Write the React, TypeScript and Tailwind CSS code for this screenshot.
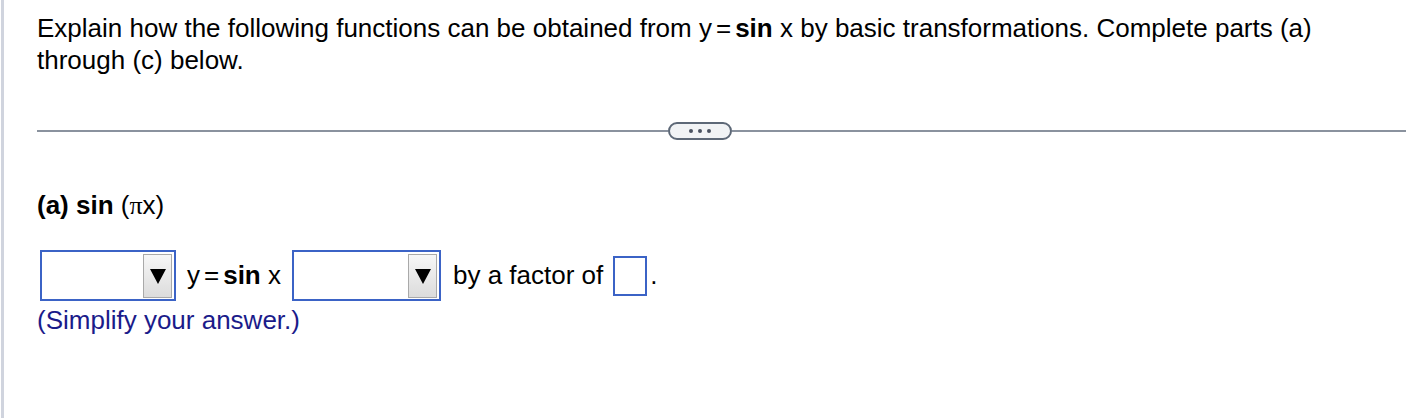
import React from 'react'

function DropTrigger() {
  return (
    <span className="flex h-[44px] w-[29px] items-center justify-center border border-[#a9a9a9] bg-gradient-to-b from-[#f7f7f7] to-[#dcdcdc]">
      <svg width="18" height="18" viewBox="0 0 18 18">
        <polygon points="1,2 17,2 9,17" fill="#000" />
      </svg>
    </span>
  )
}

function Select({ width }: { width: string }) {
  return (
    <span className={`inline-flex h-[51px] items-center justify-end border-2 border-[#3b63c6] bg-white pr-[2px] ${width}`}>
      <DropTrigger />
    </span>
  )
}

// y = sin x with the tighter spacing round "="
function YSinX() {
  return (
    <span className="whitespace-nowrap">
      y<span className="mx-[4px]">=</span><b>sin</b> x
    </span>
  )
}

export default function App() {
  return (
    <div
      className="ml-px h-[418px] border-l-[3px] border-[#d0d4de] bg-white text-[26px] text-black"
      style={{ fontFamily: '"Liberation Sans", Arial, sans-serif' }}
    >
      <div className="pl-[33px] pr-[60px] pt-[12px] leading-[32px]">
        Explain how the following functions can be obtained from <YSinX /> by basic transformations. Complete parts (a) through (c) below.
      </div>

      <div className="mt-[46px] flex items-center pl-[33px]">
        <div className="h-[2px] w-[631px] bg-[#8a929e]" />
        <div className="flex h-[18px] w-[64px] items-center justify-center gap-[5px] rounded-full border-2 border-[#5d6877] bg-[#f1f3f5]">
          <span className="h-[4px] w-[4px] rounded-full bg-[#4a5260]" />
          <span className="h-[4px] w-[4px] rounded-full bg-[#4a5260]" />
          <span className="h-[4px] w-[4px] rounded-full bg-[#4a5260]" />
        </div>
        <div className="h-[2px] flex-1 bg-[#8a929e]" />
      </div>

      <div className="mt-[49px] pl-[33px] leading-[32px]">
        <b>(a) sin</b> (<span style={{ fontFamily: '"Liberation Serif", serif' }}>π</span>x)
      </div>

      <div className="mt-[28px] flex items-center pl-[36px]">
        <Select width="w-[136px]" />
        <span className="ml-[11px] mr-[11px]">
          <YSinX />
        </span>
        <Select width="w-[149px]" />
        <span className="ml-[12px]">by a factor of</span>
        <span className="ml-[10px] inline-block h-[40px] w-[34px] border-2 border-[#3b63c6]" />
        <span className="ml-[3px]">.</span>
      </div>

      <div className="mt-[3px] pl-[33px] leading-[32px] text-[#1b1b8a]">(Simplify your answer.)</div>
    </div>
  )
}
